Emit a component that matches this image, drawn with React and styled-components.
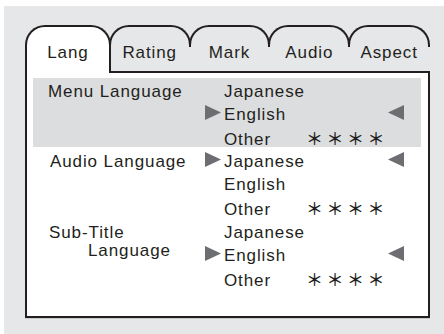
import styled, { createGlobalStyle } from 'styled-components'

const GlobalStyle = createGlobalStyle`
  body {
    margin: 0;
    background: #fff;
    font-family: "Liberation Sans", Arial, sans-serif;
    color: #231f20;
  }
`

const INK = '#231f20'

const Arrow = ({ left }) => (
  <ArrowSvg width="16" height="15" viewBox="0 0 16 15">
    {left
      ? <polygon points="16,0 16,15 0,7.5" />
      : <polygon points="0,0 0,15 16,7.5" />}
  </ArrowSvg>
)

const tabs = ['Lang', 'Rating', 'Mark', 'Audio', 'Aspect']

const sections = [
  { label: ['Menu Language'], selected: 1, highlight: true, indent: 15 },
  { label: ['Audio Language'], selected: 0, indent: 17 },
  { label: ['Sub-Title', 'Language'], selected: 1, indent: 16 }
]

const options = ['Japanese', 'English', 'Other']

const App = () => (
  <>
    <GlobalStyle />
    <Frame>
      <Panel>
        <TabBar>
          {tabs.map((t, i) => i === 0
            ? (
              <ActiveTab key={t}>
                <TabLabel>{t}</TabLabel>
              </ActiveTab>
            )
            : (
              <Tab key={t}>
                <Cap />
                <TabLabel raised>{t}</TabLabel>
              </Tab>
            ))}
        </TabBar>
        <Body>
          {sections.map((s, si) => (
            <Section key={si} highlight={s.highlight}>
              <Label indent={s.indent}>
                {s.label.map((l, li) => (
                  <LabelLine key={l} sub={li > 0} multi={s.label.length > 1}>{l}</LabelLine>
                ))}
              </Label>
              <Options>
                {options.map((o, oi) => (
                  <Option key={o}>
                    <Marker>{oi === s.selected && <Arrow />}</Marker>
                    <Value>{o}</Value>
                    <Stars>{o === 'Other' ? '＊＊＊＊' : ''}</Stars>
                    <Marker>{oi === s.selected && <Arrow left />}</Marker>
                  </Option>
                ))}
              </Options>
            </Section>
          ))}
        </Body>
      </Panel>
    </Frame>
  </>
)

export default App

const Frame = styled.div`
  margin: 6px 0 0 4px;
  width: 440px;
  height: 328px;
  box-sizing: border-box;
  background: #e6e7e8;
  padding: 19px 0 0 21px;
`

const Panel = styled.div`
  width: 405px;
  height: 293px;
  display: flex;
  flex-direction: column;
`

const TabBar = styled.div`
  display: flex;
  height: 48px;
`

const ActiveTab = styled.div`
  flex: 1 1 0;
  box-sizing: border-box;
  height: 48px;
  border: 2px solid ${INK};
  border-bottom: none;
  border-radius: 20px 20px 0 0;
  background: #fff;
  padding-top: 16px;
`

const Tab = styled.div`
  flex: 1 1 0;
  margin-left: -2px;
  box-sizing: border-box;
  height: 48px;
  border-bottom: 2px solid ${INK};
  display: flex;
  flex-direction: column;
`

const Cap = styled.div`
  height: 22px;
  box-sizing: border-box;
  border: 2px solid ${INK};
  border-bottom: none;
  border-radius: 20px 20px 0 0;
`

const TabLabel = styled.span`
  display: block;
  text-align: center;
  font-size: 17px;
  line-height: 20px;
  letter-spacing: 0.9px;
  margin-top: ${p => p.raised ? '-4px' : '0'};
`

const Body = styled.div`
  flex: 1;
  background: #fff;
  border: 2px solid ${INK};
  border-top: none;
  box-shadow: 0 1px 0 #c9cacc;
  padding: 5px 7px 0 6px;
  display: flex;
  flex-direction: column;
  gap: 1.6px;
`

const Section = styled.div`
  display: flex;
  height: 69px;
  background: ${p => p.highlight ? '#dcdddf' : 'transparent'};
`

const Label = styled.div`
  flex: none;
  width: 172px;
  box-sizing: border-box;
  padding-left: ${p => p.indent}px;
  padding-top: 1.5px;
  font-size: 17px;
  letter-spacing: 0.9px;
`

const LabelLine = styled.div`
  line-height: ${p => p.multi ? '18px' : '23px'};
  padding-top: ${p => p.multi && !p.sub ? '3.5px' : '0'};
  padding-left: ${p => p.sub ? '39px' : '0'};
`

const Options = styled.div`
  flex: 1;
  min-width: 0;
  display: flex;
  flex-direction: column;
  padding-top: 1.5px;
`

const Option = styled.div`
  display: grid;
  grid-template-columns: 19px 85px 1fr 16px;
  align-items: baseline;
  height: 23px;
  line-height: 23px;
  padding-right: 17px;
  font-size: 17px;
  letter-spacing: 0.9px;
  white-space: nowrap;
`

const Marker = styled.span`
  display: block;
`

const ArrowSvg = styled.svg`
  display: inline-block;
  vertical-align: baseline;
  fill: #6d6e71;
`

const Value = styled.span``

const Stars = styled.span`
  margin-left: -3px;
  font-family: "Noto Sans CJK JP", sans-serif;
  font-size: 17px;
  font-weight: 500;
  letter-spacing: 3.5px;
  color: #231f20;
`
